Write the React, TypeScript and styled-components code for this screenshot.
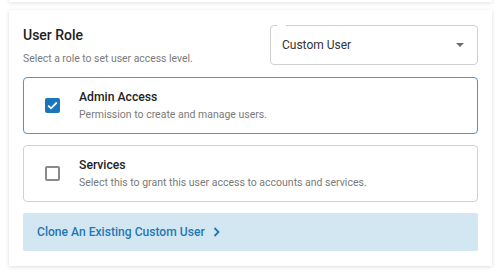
import React from "react";
import styled, { createGlobalStyle } from "styled-components";

const Global = createGlobalStyle`
  html, body { margin: 0; padding: 0; background: #ffffff; }
  body { font-family: Roboto, "Noto Sans", sans-serif; width: 500px; height: 279px; overflow: hidden; }
`;

const Page = styled.div`
  position: relative;
  padding: 10px 8px 0 9px;
`;

const PrevCard = styled.div`
  position: absolute;
  left: 9px;
  right: 8px;
  top: -20px;
  height: 22px;
  background: #fff;
  box-shadow: 0 1px 4px rgba(0, 0, 0, 0.12);
`;

const Card = styled.section`
  background: #fff;
  box-shadow: 0 1px 4px rgba(0, 0, 0, 0.14);
  padding: 15px 14px 15px 14px;
  display: flex;
  flex-direction: column;
  gap: 11px;
  width: 455px;
`;

const Header = styled.div`
  display: flex;
  justify-content: space-between;
  align-items: flex-start;
`;

const HeadText = styled.div`
  display: flex;
  flex-direction: column;
  padding-top: 2px;
`;

const Title = styled.h2`
  margin: 0;
  font-size: 14px;
  font-weight: 500;
  color: #222;
  line-height: 17px;
`;

const Sub = styled.p`
  margin: 8px 0 0;
  font-size: 10.4px;
  color: #7a7a7a;
  line-height: 14px;
`;

const SelectBox = styled.div`
  position: relative;
  width: 208px;
  height: 40px;
  border: 1px solid #cfcfcf;
  border-radius: 4px;
  box-sizing: border-box;
  display: flex;
  align-items: center;
  justify-content: space-between;
  padding: 0 13px 0 11px;
  font-size: 12px;
  color: #333;
`;

const Notch = styled.span`
  position: absolute;
  top: -1px;
  left: 6px;
  width: 9px;
  height: 2px;
  background: #fff;
`;

const Caret = styled.span`
  width: 0;
  height: 0;
  border-left: 4.5px solid transparent;
  border-right: 4.5px solid transparent;
  border-top: 4.5px solid #6e6e6e;
`;

const Option = styled.div<{ $active?: boolean }>`
  display: flex;
  align-items: center;
  gap: 19px;
  height: 57px;
  box-sizing: border-box;
  border: 1px solid ${(p) => (p.$active ? "#3f9dd6" : "#d0d0d0")};
  border-radius: 4px;
  padding: 0 0 0 21px;
`;

const Check = styled.span<{ $checked?: boolean }>`
  width: 15px;
  height: 15px;
  box-sizing: border-box;
  border-radius: 2px;
  display: flex;
  align-items: center;
  justify-content: center;
  background: ${(p) => (p.$checked ? "#1b75bb" : "#fff")};
  border: ${(p) => (p.$checked ? "none" : "2px solid #8a8a8a")};
`;

const OptText = styled.div`
  display: flex;
  flex-direction: column;
  gap: 3px;
`;

const OptTitle = styled.div`
  font-size: 12.2px;
  font-weight: 500;
  color: #222;
  line-height: 16px;
`;

const OptDesc = styled.div`
  font-size: 10.5px;
  color: #7a7a7a;
  line-height: 14px;
`;

const Clone = styled.button`
  height: 38px;
  border: none;
  border-radius: 2px;
  background: #d3e7f3;
  display: flex;
  align-items: center;
  gap: 8px;
  padding: 0 0 0 14px;
  font-family: Roboto, "Noto Sans", sans-serif;
  font-size: 12.1px;
  font-weight: 500;
  color: #1f77b4;
  cursor: pointer;
`;

export default function App() {
  return (
    <>
      <Global />
      <Page>
        <PrevCard />
        <Card>
          <Header>
            <HeadText>
              <Title>User Role</Title>
              <Sub>Select a role to set user access level.</Sub>
            </HeadText>
            <SelectBox>
              <Notch />
              <span>Custom User</span>
              <Caret />
            </SelectBox>
          </Header>
          <Option $active>
            <Check $checked>
              <svg width="11" height="9" viewBox="0 0 11 9">
                <path d="M1.2 4.6 L4 7.3 L9.8 1.5" fill="none" stroke="#fff" strokeWidth="1.8" />
              </svg>
            </Check>
            <OptText>
              <OptTitle>Admin Access</OptTitle>
              <OptDesc>Permission to create and manage users.</OptDesc>
            </OptText>
          </Option>
          <Option>
            <Check />
            <OptText>
              <OptTitle>Services</OptTitle>
              <OptDesc>Select this to grant this user access to accounts and services.</OptDesc>
            </OptText>
          </Option>
          <Clone>
            Clone An Existing Custom User
            <svg width="7" height="10" viewBox="0 0 7 10">
              <path d="M1.5 1 L5.5 5 L1.5 9" fill="none" stroke="#1f77b4" strokeWidth="1.8" />
            </svg>
          </Clone>
        </Card>
      </Page>
    </>
  );
}
